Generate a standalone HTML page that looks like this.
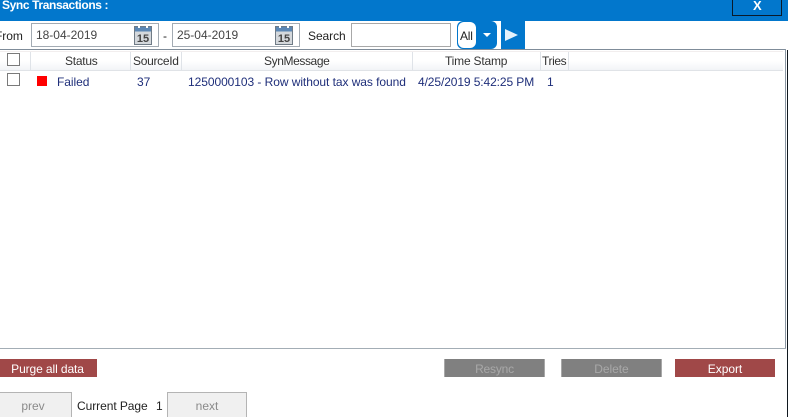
<!DOCTYPE html>
<html>
<head>
<meta charset="utf-8">
<style>
html,body{margin:0;padding:0;width:788px;height:417px;overflow:hidden;background:#fff;}
body{position:relative;font-family:"Liberation Sans",sans-serif;font-size:12px;color:#222;}
.a{position:absolute;box-sizing:border-box;}
.t{position:absolute;white-space:nowrap;line-height:16px;height:16px;letter-spacing:-0.06px;}
.h{letter-spacing:-0.12px;color:#333;}
.navy{color:#1f2f7a;}
.sep{position:absolute;top:52px;width:1px;height:18px;background:#dfe3e8;}
.btn{position:absolute;top:359px;height:18px;line-height:20px;text-align:center;font-size:12px;box-sizing:border-box;letter-spacing:-0.05px;}
.pg{position:absolute;top:392px;height:25px;line-height:27px;text-align:center;background:#f0f0f0;border:1px solid #b4b4b4;border-bottom:0;color:#8a8a8a;box-sizing:border-box;}
.cb{position:absolute;left:7px;width:13px;height:13px;border:1px solid #7a7a7a;background:#fff;box-sizing:border-box;}
.date{position:absolute;top:23px;width:128px;height:24px;border:1px solid #a3abb3;box-sizing:border-box;background:#fff;line-height:22px;padding-left:4px;color:#444;letter-spacing:-0.02px;}
</style>
</head>
<body>
<div class="a" style="left:0;top:0;width:788px;height:21px;background:#0277cc;"></div>
<div class="t" style="left:2px;top:-3px;color:#fff;font-weight:bold;letter-spacing:-0.38px;">Sync Transactions :</div>
<div class="a" style="left:732px;top:-1px;width:50px;height:17px;border:1px solid #0a1a2a;"></div>
<div class="t" style="left:753px;top:-2px;color:#fff;font-weight:bold;font-size:13px;">X</div>

<div class="t" style="left:-5px;top:28px;">From</div>
<div class="date" style="left:31px;">18-04-2019</div>
<svg class="a" style="left:133px;top:25px;" width="20" height="20" viewBox="0 0 20 20">
<rect x="1.5" y="1.500" width="17" height="18" fill="#d4d8dc" stroke="#6f7b86"/>
<rect x="2" y="2" width="16" height="4.500" fill="#5b87b5"/>
<rect x="5" y="1" width="2" height="2" fill="#fff"/><rect x="13" y="1" width="2" height="2" fill="#fff"/>
<text x="10" y="17" font-family="Liberation Sans" font-size="11" text-anchor="middle" fill="#444" font-weight="bold">15</text>
</svg>
<div class="t" style="left:163px;top:28px;">-</div>
<div class="date" style="left:172px;">25-04-2019</div>
<svg class="a" style="left:274px;top:25px;" width="20" height="20" viewBox="0 0 20 20">
<rect x="1.5" y="1.500" width="17" height="18" fill="#d4d8dc" stroke="#6f7b86"/>
<rect x="2" y="2" width="16" height="4.500" fill="#5b87b5"/>
<rect x="5" y="1" width="2" height="2" fill="#fff"/><rect x="13" y="1" width="2" height="2" fill="#fff"/>
<text x="10" y="17" font-family="Liberation Sans" font-size="11" text-anchor="middle" fill="#444" font-weight="bold">15</text>
</svg>
<div class="t" style="left:308px;top:28px;">Search</div>
<div class="a" style="left:351px;top:23px;width:100px;height:24px;border:1px solid #a8a8a8;"></div>

<div class="a" style="left:457px;top:21px;width:40px;height:28px;background:#0277cc;border-radius:6px;"></div>
<div class="a" style="left:458px;top:22px;width:18px;height:26px;background:#fff;border-radius:6px;"></div>
<div class="t" style="left:460px;top:28px;color:#222;letter-spacing:-0.2px;">All</div>
<svg class="a" style="left:482px;top:32px;" width="10" height="6"><path d="M1 1H9L5 5Z" fill="#fff"/></svg>
<div class="a" style="left:501px;top:21px;width:24px;height:28px;background:#0277cc;"></div>
<svg class="a" style="left:504px;top:28px;" width="16" height="14"><path d="M1 1L14 7L1 13Z" fill="#e4f2fc"/></svg>

<div class="a" style="left:-2px;top:49px;width:788px;height:1px;background:#7f8c99;"></div>
<div class="a" style="left:785px;top:49px;width:1px;height:300px;background:#8a96a2;"></div>
<div class="a" style="left:-2px;top:348px;width:788px;height:1px;background:#a3adb5;"></div>
<div class="a" style="left:0;top:51px;width:783px;height:20px;background:linear-gradient(#fff 0,#fff 50%,#f2f4f7 100%);border-top:1px solid #f2eeee;border-bottom:1px solid #e0e3e7;"></div>
<div class="sep" style="left:30px;"></div>
<div class="sep" style="left:130px;"></div>
<div class="sep" style="left:181px;"></div>
<div class="sep" style="left:412px;"></div>
<div class="sep" style="left:540px;"></div>
<div class="sep" style="left:568px;"></div>
<div class="cb" style="top:53px;"></div>
<div class="t h" style="left:65px;top:53px;letter-spacing:-0.25px;">Status</div>
<div class="t h" style="left:133px;top:53px;letter-spacing:-0.3px;">SourceId</div>
<div class="t h" style="left:264px;top:53px;letter-spacing:-0.4px;">SynMessage</div>
<div class="t h" style="left:445px;top:53px;letter-spacing:-0.2px;">Time Stamp</div>
<div class="t h" style="left:542px;top:53px;letter-spacing:-0.4px;">Tries</div>

<div class="cb" style="top:73px;"></div>
<div class="a" style="left:37px;top:76px;width:10px;height:10px;background:#f00;"></div>
<div class="t navy" style="left:57px;top:74px;">Failed</div>
<div class="t navy" style="left:137px;top:74px;">37</div>
<div class="t navy" style="left:188px;top:74px;letter-spacing:-0.06px;">1250000103 - Row without tax was found</div>
<div class="t navy" style="left:418px;top:74px;letter-spacing:-0.1px;">4/25/2019 5:42:25 PM</div>
<div class="t navy" style="left:547px;top:74px;">1</div>

<div class="btn" style="left:0;width:97px;background:#a04848;color:#fff;letter-spacing:-0.1px;padding-right:2px;">Purge all data</div>
<div class="btn" style="left:444px;width:101px;background:#808080;color:#a8a8a8;border-left:1px solid #a8a8a8;border-right:1px solid #a8a8a8;letter-spacing:-0.2px;">Resync</div>
<div class="btn" style="left:561px;width:101px;background:#808080;color:#a8a8a8;border-left:1px solid #a8a8a8;border-right:1px solid #a8a8a8;">Delete</div>
<div class="btn" style="left:675px;width:100px;background:#a04848;color:#fff;">Export</div>

<div class="pg" style="left:-6px;width:78px;">prev</div>
<div class="t" style="left:77px;top:398px;">Current Page</div>
<div class="t" style="left:156px;top:398px;">1</div>
<div class="pg" style="left:167px;width:80px;">next</div>

<div class="a" style="left:787px;top:50px;width:1px;height:367px;background:#10181f;"></div>
</body>
</html>
